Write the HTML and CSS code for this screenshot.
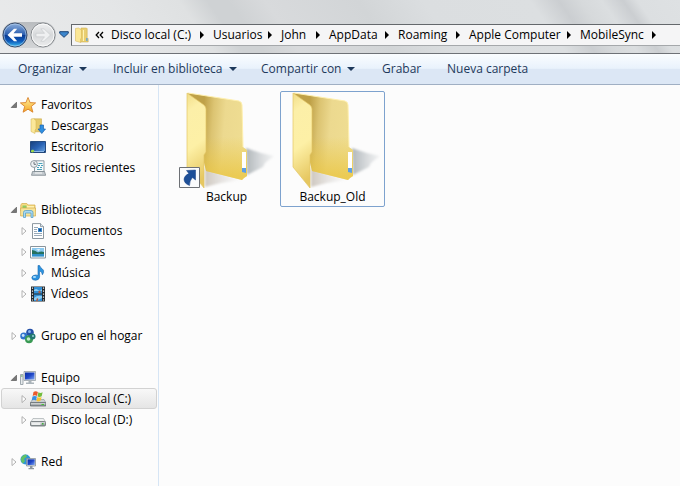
FILE: index.html
```html
<!DOCTYPE html>
<html lang="es">
<head>
<meta charset="utf-8">
<meta name="viewport" content="width=device-width, initial-scale=1">
<title>MobileSync</title>
<link rel="stylesheet" href="styles.css">
</head>
<body>
<svg class="defs" aria-hidden="true">
  <defs>
    <filter id="soft" x="-20%" y="-20%" width="140%" height="140%"><feGaussianBlur stdDeviation="1.2"/></filter>
    <linearGradient id="gFlap" x1="0" y1="0" x2="0.15" y2="1"><stop offset="0" stop-color="#f1dd88"/><stop offset=".2" stop-color="#fcefa8"/><stop offset=".6" stop-color="#fdf0a6"/><stop offset="1" stop-color="#e6c760"/></linearGradient>
    <linearGradient id="gBack" x1="0" y1="0" x2="1" y2=".12"><stop offset="0.28" stop-color="#bfa148"/><stop offset=".45" stop-color="#dcc472"/><stop offset=".65" stop-color="#ecd98f"/><stop offset="1" stop-color="#efdd92"/></linearGradient>
    <linearGradient id="gLow" x1="0" y1="0" x2="0" y2="1"><stop offset=".5" stop-color="#e9c63f" stop-opacity="0"/><stop offset=".95" stop-color="#eac540" stop-opacity=".75"/></linearGradient>
    <linearGradient id="gShade" x1="0" y1="0" x2="1" y2="0"><stop offset="0" stop-color="#8e979c" stop-opacity=".7"/><stop offset="1" stop-color="#b8bec2" stop-opacity=".15"/></linearGradient>
    <linearGradient id="gUnder" x1="0" y1="0" x2="1" y2="0"><stop offset="0" stop-color="#a99c8c" stop-opacity=".55"/><stop offset="1" stop-color="#c8c8c8" stop-opacity=".05"/></linearGradient>
    <linearGradient id="gBlue" x1="0" y1="0" x2="0" y2="1"><stop offset="0" stop-color="#8fb0dc"/><stop offset=".48" stop-color="#2c5fb0"/><stop offset=".5" stop-color="#0b3a92"/><stop offset=".75" stop-color="#0c58b8"/><stop offset="1" stop-color="#3fc4f5"/></linearGradient>
    <linearGradient id="gGrey" x1="0" y1="0" x2="0" y2="1"><stop offset="0" stop-color="#f0f1f2"/><stop offset=".5" stop-color="#d7d9db"/><stop offset="1" stop-color="#eceded"/></linearGradient>
    <linearGradient id="gScreen" x1="0" y1="0" x2="1" y2="1"><stop offset="0" stop-color="#0a2fa0"/><stop offset=".5" stop-color="#1e46c8"/><stop offset="1" stop-color="#7fa5f0"/></linearGradient>
    <linearGradient id="gDesk" x1="0" y1="0" x2="1" y2="1"><stop offset="0" stop-color="#173f7c"/><stop offset=".5" stop-color="#2862b4"/><stop offset="1" stop-color="#70a8e2"/></linearGradient>
    <linearGradient id="gStar" x1="0" y1="0" x2="0" y2="1"><stop offset="0" stop-color="#fff1a0"/><stop offset="1" stop-color="#f5a623"/></linearGradient>
    <linearGradient id="gMetal" x1="0" y1="0" x2="0" y2="1"><stop offset="0" stop-color="#e4e6e6"/><stop offset="1" stop-color="#878e92"/></linearGradient>

    <symbol id="folder" viewBox="0 0 96 96">
      <path d="M67 56 82 61 95 64 86 71 84 75 68 83Z" fill="url(#gShade)" filter="url(#soft)"/>
      <path d="M26 77 62 88 42 91 26 95Z" fill="url(#gUnder)" filter="url(#soft)"/>
      <path d="M9 1 60 9Q63 10 63 13L64 55 68 58 68 84 65 86 63 88 27 79Z" fill="url(#gBack)"/>
      <path d="M9 1 60 9Q63 10 63 13L64 55 68 58 68 84 65 86 63 88 27 79Z" fill="url(#gLow)"/>
      <path d="M9 1 60 9Q63 10 63 13L64 55" fill="none" stroke="#fff0af"/>
      <path d="M63 60 67 60 67 80 63 79Z" fill="#fff"/><path d="M63 76 67 76 67 81 63 80Z" fill="#5e9fe4"/>
      <path d="M8 1 25 13Q27 15 27 17L27 60 25 63 25 96 8 75Z" fill="url(#gFlap)" stroke="#e3c565" stroke-width=".7"/>
    </symbol>
    <symbol id="folder-small" viewBox="0 0 16 16">
      <path d="M7 1h5.500l.7.700v9l1 1V15H6z" fill="#e9cf72" stroke="#c9a640" stroke-width=".5"/>
      <path d="M1.500 1.500 4.500 1l3 2v8l-.8 1v3.500L1.500 14z" fill="#fbe796" stroke="#d2b04c" stroke-width=".5"/>
      <path d="M12.300 11h1.200v3h-1.200z" fill="#4f9be6"/><path d="M9 3h1v11H9z" fill="#fff3b6"/>
    </symbol>
    <symbol id="star" viewBox="0 0 16 16"><path d="M8 .5l2.100 5.100 5.500.3-4.300 3.500 1.600 5.800L8 12.200l-4.900 3 1.600-5.800L.4 5.900 5.900 5.600z" fill="url(#gStar)" stroke="#d9822b" stroke-width=".9"/></symbol>
    <symbol id="download" viewBox="0 0 16 16">
      <path d="M4 .8h7.500v13H4z" fill="#e6cb6c" stroke="#c4a13b" stroke-width=".5"/><path d="M1 1 3.500.5 6 2.500V11l-1 1v3.500L1 13.500z" fill="#fbe89a" stroke="#d2b04c" stroke-width=".5"/>
      <path d="M10 7h3.500v4h2l-3.700 4.500L8 11h2z" fill="#2f8fe0" stroke="#1c62ad" stroke-width=".7"/>
    </symbol>
    <symbol id="desktop" viewBox="0 0 16 16"><path d="M.5 2.500h15v11H.5z" fill="url(#gDesk)" stroke="#254c82"/><path d="M1 12h14v1.500H1z" fill="#204274"/><path d="M4 12h10v1H4z" fill="#8bb8e8"/><path d="M1 11.500 3 10.500 4.500 12 3 13.500 1 13z" fill="#9fda4a"/></symbol>
    <symbol id="recent" viewBox="0 0 16 16"><path d="M4.500.8h9.500v11H4.500z" fill="#f5f9fb" stroke="#74838e" stroke-width=".8"/><path d="M8.500 3.500h4M8 5.500h2m1 0h2M7 7.500h2m1 0h2M7 9.500h5" stroke="#4aa2ba"/><circle cx="4" cy="4" r="3.400" fill="#eef1f3" stroke="#89949b" stroke-width=".9"/><path d="M4 2v2.300h2" fill="none" stroke="#4d5961" stroke-width=".8"/><path d="M2.500 11.500h12l1.200 3.800H1.500z" fill="#c4cbd0" stroke="#717c84" stroke-width=".7"/><path d="M5 13h7" stroke="#f8f8f8"/></symbol>
    <symbol id="libraries" viewBox="0 0 16 16"><path d="M.8 3 1.800 1.500h5L8 3h7v6H.8z" fill="#f6dc84" stroke="#d3ab45" stroke-width=".7"/><path d="M2.500 3.500h4v3h-4z" fill="#8ccd64"/><path d="M7 4h7v3H7z" fill="#fff2b2"/><path d="M.6 6h15V14H.6z" fill="#f7e49a" stroke="#d3ab45" stroke-width=".7"/><path d="M3.500 15.500V10.500Q3.500 8.500 5.500 8.500h5.500Q13 8.500 13 10.500v5h-2v-4.500h-5.500v4.500z" fill="#a9d9f2" stroke="#4e99c7" stroke-width=".7"/></symbol>
    <symbol id="document" viewBox="0 0 16 16"><path d="M2.500.6h8L13.500 3.500v12h-11z" fill="#fff" stroke="#7f8b94" stroke-width=".9"/><path d="M10.500.6v3h3" fill="#dbe3e9" stroke="#7f8b94" stroke-width=".8"/><path d="M4 4.500h4M4 6.500h3M4 8.500h3M4 10.500h8M4 12.500h8" stroke="#9aaab8"/><path d="M8 5h4v4H8z" fill="#3b8acb"/><path d="M9 6h2v2H9z" fill="#174e96"/></symbol>
    <symbol id="picture" viewBox="0 0 16 16"><path d="M.5 2.500h15v11.500H.5z" fill="#fff" stroke="#89949c"/><path d="M2 4h12v8.500H2z" fill="#8bc9ef"/><path d="M2 6q3 0 6 2.500 3-1.500 6-.5V10H2z" fill="#26715e"/><path d="M2 10h12v2.500H2z" fill="#3291c9"/><path d="M6 5.500 10 5l-1 2z" fill="#e9f7ff"/></symbol>
    <symbol id="music" viewBox="0 0 16 16"><path d="M8 .5h1.600q.5 2 2.500 3.200t1.500 3.800l-1.200 2.300q-.3-3-2.800-4V12q-.3 3-4 3.300Q1.800 15.200 1.800 12.800T5.500 10q1.500 0 2.500.6z" fill="#2c93df" stroke="#1765ad" stroke-width=".6"/><ellipse cx="4.500" cy="12" rx="1.700" ry="1" fill="#a7dbfa"/></symbol>
    <symbol id="video" viewBox="0 0 16 16"><path d="M1 .5h14v15H1z" fill="#22282d"/><path d="M4 1h8v6.500H4zM4 8.500h8V15H4z" fill="#318fd6"/><path d="M4 4q2-2 4 0t4-1v2H4zM4 12q3-3 8-2v2l-4 2H4z" fill="#8ccdf3"/><path d="M8 6l1.500-1.500L11 6 9.500 7.500zM7 12l1.500 1-1 2H6z" fill="#b45b3b"/><path d="M2.500 1.500v13M13.500 1.500v13" stroke="#f5f5f5" stroke-width="1.200" stroke-dasharray="1.200 1.800"/></symbol>
    <symbol id="homegroup" viewBox="0 0 16 16"><circle cx="10" cy="4.500" r="3.800" fill="#2450a8"/><circle cx="3.800" cy="8" r="3.600" fill="#2f74cc"/><circle cx="9" cy="11.200" r="4" fill="#3a9a55"/><circle cx="12.500" cy="8.500" r="3" fill="#23786e"/><circle cx="9.500" cy="3.600" r="1.500" fill="#86b4ee"/><circle cx="3.200" cy="7.500" r="1.400" fill="#cbe4fb"/><circle cx="8.500" cy="11" r="1.800" fill="#c3ebc9"/><circle cx="13" cy="8" r="1" fill="#9ad2dc"/></symbol>
    <symbol id="computer" viewBox="0 0 16 16"><path d="M.5 4.500h2.500v10H.5z" fill="#e6eaec" stroke="#8d979e" stroke-width=".8"/><path d="M1 6h1.500" stroke="#54a64a"/><path d="M4 1.500h11.500v9H4z" fill="#dfe4e7" stroke="#8c959c" stroke-width=".7"/><path d="M5 2.500h9.500v7H5z" fill="url(#gScreen)"/><path d="M8.500 11h3v1.500h2.500V14H6v-1.500h2.500z" fill="#aab3b9"/></symbol>
    <symbol id="windrive" viewBox="0 0 16 16"><path d="M2.500 8.500h11.500l1.800 3H.5z" fill="#c8cdd0" stroke="#7b8389" stroke-width=".5"/><path d="M.5 11.500h15.300V15H.5z" fill="url(#gMetal)" stroke="#555d62" stroke-width=".7"/><path d="M11.500 13h2.500v1h-2.500z" fill="#45c435"/><path d="M3.500 1q2.200-1.500 4.400 0L7 5Q4.800 3.700 2.700 5z" fill="#e95a2b"/><path d="M8.400 1.300q2 1.500 4.200 0L11.700 5.200q-2.200 1.400-4.200.3z" fill="#72bd3d"/><path d="M2.500 5.600q2.200-1.300 4.400 0L6 9.600q-2.200-1.500-4.300 0z" fill="#358ee2"/><path d="M7.400 6q2.200 1.200 4.200-.1L10.700 9.600q-2.200 1.500-4.200.4z" fill="#f7c331"/></symbol>
    <symbol id="drive" viewBox="0 0 16 16"><path d="M3 6.500h10.500l2 3.500H.8z" fill="#eff1f1" stroke="#999fa3" stroke-width=".6"/><rect x=".5" y="9.500" width="15" height="4.500" rx="1" fill="url(#gMetal)" stroke="#686e72" stroke-width=".8"/><path d="M1.500 10.500h9v2.500h-9z" fill="#eceeee"/><path d="M12 11h1.500v1.500H12z" fill="#3eb33a"/></symbol>
    <symbol id="network" viewBox="0 0 16 16"><circle cx="5.500" cy="5.500" r="5" fill="#2d94d8"/><path d="M1 4q2-3.500 5-3.500l1 2-3 2.500 1 2-2 2.500Q.5 7.500 1 4z" fill="#62c267"/><path d="M6.500 4.500H15.500v7.500H6.500z" fill="#dbe1e5" stroke="#7d868d" stroke-width=".7"/><path d="M7.500 5.300h7.200v5.700H7.500z" fill="url(#gScreen)"/><path d="M10 12h2.500v2H14v1.300H8.500V14H10z" fill="#8c969e"/></symbol>
    <symbol id="open" viewBox="0 0 8 8"><path d="M6.500 1.200v5.300H1.200z" fill="#777" stroke="#4a4a4a" stroke-width=".6"/></symbol>
    <symbol id="closed" viewBox="0 0 8 8"><path d="M2 .6v7L6 4z" fill="#fff" stroke="#a9a9a9" stroke-width=".9"/></symbol>
    <symbol id="sep" viewBox="0 0 4 8"><path d="M0 0v8l4-4z" fill="#000"/></symbol>
    <symbol id="caret" viewBox="0 0 8 4"><path d="M0 0h8L4 4z" fill="#1e395b"/></symbol>
  </defs>
</svg>

<header class="chrome">
  <div class="travel">
    <button class="round" aria-label="Atrás"><svg viewBox="0 0 26 26"><circle cx="13" cy="13" r="12" fill="url(#gBlue)" stroke="#3a4c6a"/><circle cx="13" cy="13" r="11" fill="none" stroke="#b9d3ee" stroke-opacity=".6"/><path d="M5.500 13 12 6.800h3.200L11.500 11.300H20v3.500h-8.500l3.700 4.500H12z" fill="#fff"/></svg></button>
    <button class="round" aria-label="Adelante"><svg viewBox="0 0 26 26"><circle cx="13" cy="13" r="12" fill="url(#gGrey)" stroke="#85898d"/><circle cx="13" cy="13" r="11" fill="none" stroke="#fff" stroke-opacity=".8"/><path d="M20.500 13 14 6.800h-3.200l3.700 4.500H6v3.500h8.500l-3.700 4.500H14z" fill="#eff0f1" stroke="#c5c8ca" stroke-width=".6"/></svg></button>
  </div>
  <button class="history" aria-label="Páginas recientes"><svg viewBox="0 0 10 7"><path d="M.7.7h8.600v1.600L5 6.300.7 2.300z" fill="#3c86cc" stroke="#1c4477"/></svg></button>
  <nav class="address" aria-label="Ruta">
    <svg class="icon"><use href="#folder-small"/></svg>
    <svg class="more" viewBox="0 0 9 8"><path d="M4 1 1.200 4 4 7M8 1 5.200 4 8 7" fill="none" stroke="#000" stroke-width="1.300"/></svg>
    <div class="crumbs">
      <a href="#">Disco local (C:)<svg class="sep"><use href="#sep"/></svg></a>
      <a href="#">Usuarios<svg class="sep"><use href="#sep"/></svg></a>
      <a href="#">John<svg class="sep"><use href="#sep"/></svg></a>
      <a href="#">AppData<svg class="sep"><use href="#sep"/></svg></a>
      <a href="#">Roaming<svg class="sep"><use href="#sep"/></svg></a>
      <a href="#">Apple Computer<svg class="sep"><use href="#sep"/></svg></a>
      <a href="#">MobileSync<svg class="sep"><use href="#sep"/></svg></a>
    </div>
  </nav>
</header>

<div class="toolbar">
  <button>Organizar<svg class="caret"><use href="#caret"/></svg></button>
  <button>Incluir en biblioteca<svg class="caret"><use href="#caret"/></svg></button>
  <button>Compartir con<svg class="caret"><use href="#caret"/></svg></button>
  <button>Grabar</button>
  <button>Nueva carpeta</button>
</div>

<div class="body">
  <nav class="tree" aria-label="Panel de navegación">
    <div class="group">
      <a class="row" href="#"><svg class="tw"><use href="#open"/></svg><svg class="icon"><use href="#star"/></svg>Favoritos</a>
      <a class="row sub" href="#"><span class="tw"></span><svg class="icon"><use href="#download"/></svg>Descargas</a>
      <a class="row sub" href="#"><span class="tw"></span><svg class="icon"><use href="#desktop"/></svg>Escritorio</a>
      <a class="row sub" href="#"><span class="tw"></span><svg class="icon"><use href="#recent"/></svg>Sitios recientes</a>
    </div>
    <div class="group">
      <a class="row" href="#"><svg class="tw"><use href="#open"/></svg><svg class="icon"><use href="#libraries"/></svg>Bibliotecas</a>
      <a class="row sub" href="#"><svg class="tw"><use href="#closed"/></svg><svg class="icon"><use href="#document"/></svg>Documentos</a>
      <a class="row sub" href="#"><svg class="tw"><use href="#closed"/></svg><svg class="icon"><use href="#picture"/></svg>Imágenes</a>
      <a class="row sub" href="#"><svg class="tw"><use href="#closed"/></svg><svg class="icon"><use href="#music"/></svg>Música</a>
      <a class="row sub" href="#"><svg class="tw"><use href="#closed"/></svg><svg class="icon"><use href="#video"/></svg>Vídeos</a>
    </div>
    <div class="group">
      <a class="row" href="#"><svg class="tw"><use href="#closed"/></svg><svg class="icon"><use href="#homegroup"/></svg>Grupo en el hogar</a>
    </div>
    <div class="group">
      <a class="row" href="#"><svg class="tw"><use href="#open"/></svg><svg class="icon"><use href="#computer"/></svg>Equipo</a>
      <a class="row sub selected" href="#"><svg class="tw"><use href="#closed"/></svg><svg class="icon"><use href="#windrive"/></svg>Disco local (C:)</a>
      <a class="row sub" href="#"><svg class="tw"><use href="#closed"/></svg><svg class="icon"><use href="#drive"/></svg>Disco local (D:)</a>
    </div>
    <div class="group">
      <a class="row" href="#"><svg class="tw"><use href="#closed"/></svg><svg class="icon"><use href="#network"/></svg>Red</a>
    </div>
  </nav>
  <main class="files">
    <a class="item" href="#">
      <svg class="big"><use href="#folder"/></svg>
      <svg class="shortcut" viewBox="0 0 21 21"><path d="M.5.5h20v20H.5z" fill="#fafbfc" stroke="#6d7075"/><path d="M7.500 3.500 16.500 3V13L13.500 10.500Q10.500 13.500 10.500 18.500 5 16.500 5 12 5.500 8.500 9.800 6.500z" fill="#1d4f98" stroke="#143c80" stroke-width=".5"/></svg>
      Backup
    </a>
    <a class="item current" href="#"><svg class="big"><use href="#folder"/></svg>Backup_Old</a>
  </main>
</div>
</body>
</html>
```
FILE: styles.css
```css
* { box-sizing: border-box; }
html { height: 100%; }
body {
  margin: 0;
  min-height: 100%;
  display: flex;
  flex-direction: column;
  background: #fcfcfc;
  color: #000;
  font: 12px/20px "Open Sans", "Noto Sans", sans-serif;
}
svg { display: block; flex: none; }
a { color: inherit; text-decoration: none; }
button { padding: 0; border: 0; background: none; color: inherit; font: inherit; }
.defs { position: absolute; width: 0; height: 0; }
.icon { width: 16px; height: 16px; }

.chrome {
  display: flex;
  align-items: center;
  padding: 16px 0 0 2px;
  height: 54px;
  border-bottom: 1px solid #6e7277;
  background: linear-gradient(55deg,
    #e9eaeb 0, #e4e6e7 20%, #dfe1e2 30%, #cfd2d4 34%, #cfd2d4 37%, #d8dadc 42%,
    #d2d5d7 55%, #dbdee0 64%, #dcdfe1 79%, #cbced1 83%, #d6d9db 86%,
    #dbdee0 89%, #cbced1 92%, #dcdfe1 94%, #dee1e3 100%);
}
.travel {
  display: flex;
  gap: 2px;
  border-radius: 13px;
  background: linear-gradient(#b9bcbf, #d3d5d7);
}
.round, .round svg { width: 26px; height: 26px; }
.history { margin: 0 2px 0 3px; }
.history svg { width: 10px; height: 7px; }
.address {
  flex: 1;
  display: flex;
  align-items: center;
  height: 22px;
  padding-left: 2px;
  border: 1px solid #a5a8ab;
  border-top-color: #64686c;
  border-left-color: #64686c;
  border-right: 0;
  background: #f5f5f6;
  white-space: nowrap;
}
.more { width: 9px; height: 8px; margin: 0 7px 0 5px; }
.crumbs {
  display: grid;
  grid-template-columns: 102px 68px 48px 69px 71px 111px 85px;
}
.crumbs a {
  display: flex;
  align-items: center;
  justify-content: space-between;
  padding-right: 9px;
}
.sep { width: 4px; height: 8px; }

.toolbar {
  display: grid;
  grid-template-columns: 95px 148px 121px 65px auto;
  align-items: center;
  justify-content: start;
  height: 31px;
  padding-left: 18px;
  border-bottom: 1px solid #a0afc3;
  background: linear-gradient(#fafdff 0, #e9f2fc 48%, #dce7f5 50%, #dce7f5 100%);
  color: #1e395b;
  white-space: nowrap;
}
.toolbar button { display: flex; align-items: center; gap: 6px; }
.caret { width: 8px; height: 4px; }

.body { flex: 1; display: flex; }
.tree {
  width: 159px;
  flex: none;
  display: flex;
  flex-direction: column;
  gap: 21px;
  padding: 9px 1px 0;
  border-right: 1px solid #d6e5f5;
}
.row {
  display: flex;
  align-items: center;
  height: 21px;
  padding-left: 8px;
  border: 1px solid transparent;
  white-space: nowrap;
}
.row .icon { margin: 0 5px 0 2px; }
.sub { padding-left: 18px; }
.tw { width: 8px; height: 8px; }
.selected {
  border-color: #d2d2d2;
  border-radius: 3px;
  background: linear-gradient(#f8f8f8, #e5e5e5);
}

.files {
  flex: 1;
  display: flex;
  align-items: flex-start;
  gap: 1px;
  padding: 6px 0 0 15px;
}
.item {
  position: relative;
  display: flex;
  flex-direction: column;
  align-items: center;
  width: 105px;
  height: 116px;
  border: 1px solid transparent;
  border-radius: 2px;
  line-height: 18px;
}
.current { border-color: #7da2ce; }
.big { width: 96px; height: 96px; }
.shortcut { position: absolute; left: 4px; top: 75px; width: 21px; height: 21px; }
```
